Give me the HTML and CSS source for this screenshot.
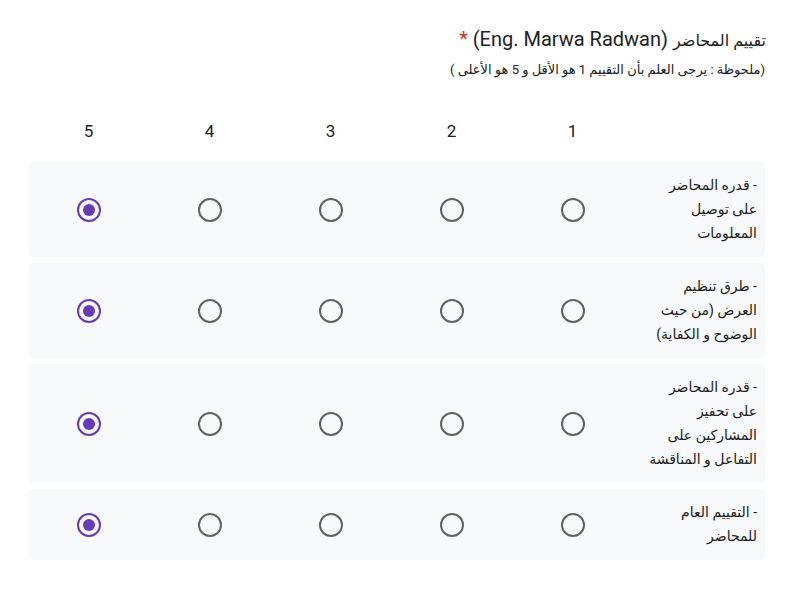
FILE: index.html
```html
<!DOCTYPE html>
<html lang="ar">
<head>
<meta charset="utf-8">
<title>تقييم المحاضر</title>
<link rel="stylesheet" href="styles.css">
</head>
<body>
<div class="question" dir="rtl">
  <div class="title"><span class="ar">تقييم المحاضر</span> (Eng. Marwa Radwan) <span class="req">*</span></div>
  <div class="desc">(ملحوظة : يرجى العلم بأن التقييم 1 هو الأقل و 5 هو الأعلى )</div>
  <div class="grid">
    <div class="head">
      <div class="corner"></div>
      <div class="num">1</div>
      <div class="num">2</div>
      <div class="num">3</div>
      <div class="num">4</div>
      <div class="num">5</div>
    </div>
    <div class="row">
      <div class="label">- قدره المحاضر<br>على توصيل<br>المعلومات</div>
      <div class="cell"><span class="radio"></span></div>
      <div class="cell"><span class="radio"></span></div>
      <div class="cell"><span class="radio"></span></div>
      <div class="cell"><span class="radio"></span></div>
      <div class="cell"><span class="radio checked"></span></div>
    </div>
    <div class="row">
      <div class="label">- طرق تنظيم<br>العرض (من حيث<br>الوضوح و الكفاية)</div>
      <div class="cell"><span class="radio"></span></div>
      <div class="cell"><span class="radio"></span></div>
      <div class="cell"><span class="radio"></span></div>
      <div class="cell"><span class="radio"></span></div>
      <div class="cell"><span class="radio checked"></span></div>
    </div>
    <div class="row">
      <div class="label">- قدره المحاضر<br>على تحفيز<br>المشاركين على<br>التفاعل و المناقشة</div>
      <div class="cell"><span class="radio"></span></div>
      <div class="cell"><span class="radio"></span></div>
      <div class="cell"><span class="radio"></span></div>
      <div class="cell"><span class="radio"></span></div>
      <div class="cell"><span class="radio checked"></span></div>
    </div>
    <div class="row">
      <div class="label">- التقييم العام<br>للمحاضر</div>
      <div class="cell"><span class="radio"></span></div>
      <div class="cell"><span class="radio"></span></div>
      <div class="cell"><span class="radio"></span></div>
      <div class="cell"><span class="radio"></span></div>
      <div class="cell"><span class="radio checked"></span></div>
    </div>
  </div>
</div>
</body>
</html>
```

FILE: styles.css
```css
html, body {
  margin: 0;
  padding: 0;
  background: #ffffff;
}

body {
  font-family: Roboto, "DejaVu Sans", sans-serif;
  color: #202124;
}

.question {
  width: 737px;
  margin-left: 28px;
  padding-top: 27px;
}

.title {
  font-size: 20px;
  line-height: 24px;
  height: 24px;
  margin-right: -1px;
}

.title .ar {
  font-size: 16px;
}

.req {
  color: #d93025;
}

.desc {
  font-size: 13px;
  line-height: 20px;
  margin-top: 9px;
}

.grid {
  margin-top: 39px;
  display: flex;
  flex-direction: column;
  gap: 5.6px;
}

.head,
.row {
  display: grid;
  grid-template-columns: 132px repeat(5, 121px);
  align-items: center;
}

.head {
  height: 24px;
  margin-bottom: 13px;
}

.num {
  text-align: center;
  font-size: 17px;
  line-height: 24px;
}

.row {
  background: #f8f9fa;
  border-radius: 5px;
  padding: 11.7px 0;
}

.label {
  font-size: 14px;
  line-height: 24px;
  padding-right: 8px;
  text-align: right;
}

.cell {
  display: flex;
  justify-content: center;
  align-items: center;
  padding-top: 2px;
}

.radio {
  box-sizing: border-box;
  width: 24px;
  height: 24px;
  border: 2.4px solid #5f6368;
  border-radius: 50%;
  display: flex;
  justify-content: center;
  align-items: center;
}

.radio.checked {
  border-color: #673ab7;
}

.radio.checked::after {
  content: "";
  width: 12px;
  height: 12px;
  border-radius: 50%;
  background: #673ab7;
}
```
